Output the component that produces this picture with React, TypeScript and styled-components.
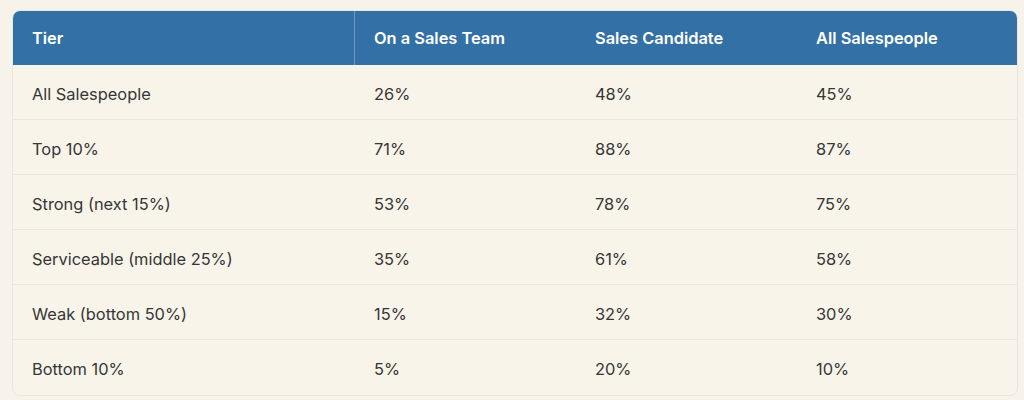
import styled, { createGlobalStyle } from 'styled-components'

const rows = [
  ['All Salespeople', '26%', '48%', '45%'],
  ['Top 10%', '71%', '88%', '87%'],
  ['Strong (next 15%)', '53%', '78%', '75%'],
  ['Serviceable (middle 25%)', '35%', '61%', '58%'],
  ['Weak (bottom 50%)', '15%', '32%', '30%'],
  ['Bottom 10%', '5%', '20%', '10%'],
]

const headers = ['Tier', 'On a Sales Team', 'Sales Candidate', 'All Salespeople']
const widths = [342, 221, 221]

export default function App() {
  return (
    <>
      <GlobalStyle />
      <Page>
        <Table>
          <colgroup>
            {widths.map((w, i) => (
              <Col key={i} w={w} />
            ))}
            <Col />
          </colgroup>
          <thead>
            <tr>
              {headers.map((h, i) => (
                <Th key={h} divided={i === 0}>
                  {h}
                </Th>
              ))}
            </tr>
          </thead>
          <tbody>
            {rows.map((r, i) => (
              <Tr key={r[0]} last={i === rows.length - 1}>
                {r.map((c, j) => (
                  <Td key={j}>{c}</Td>
                ))}
              </Tr>
            ))}
          </tbody>
        </Table>
      </Page>
    </>
  )
}

const GlobalStyle = createGlobalStyle`
  body {
    margin: 0;
    background: #f7f3ea;
    font-family: Inter, 'Noto Sans', sans-serif;
  }
`

const Page = styled.div`
  width: 1024px;
  height: 400px;
  padding: 10px 6px 0 12px;
  box-sizing: border-box;
`

const Table = styled.table`
  width: 1006px;
  border-collapse: separate;
  border-spacing: 0;
  table-layout: fixed;
  background: #f8f4ea;
  border: 1px solid #ebe6db;
  border-radius: 8px;
  overflow: hidden;
`

const Col = styled.col<{ w?: number }>`
  width: ${(p) => (p.w ? `${p.w}px` : 'auto')};
`

const Th = styled.th<{ divided?: boolean }>`
  height: 54px;
  padding: 0 19px;
  background: #3270a5;
  color: #ffffff;
  font-size: 16.4px;
  font-weight: 600;
  text-align: left;
  border-right: ${(p) => (p.divided ? '1px solid #6f9bc4' : 'none')};
`

const Tr = styled.tr<{ last?: boolean }>`
  td {
    border-bottom: ${(p) => (p.last ? 'none' : '1px solid #ece7dc')};
  }
`

const Td = styled.td`
  height: 55px;
  padding: 3px 19px 0;
  box-sizing: border-box;
  color: #363636;
  font-size: 16.4px;
  font-weight: 400;
`
